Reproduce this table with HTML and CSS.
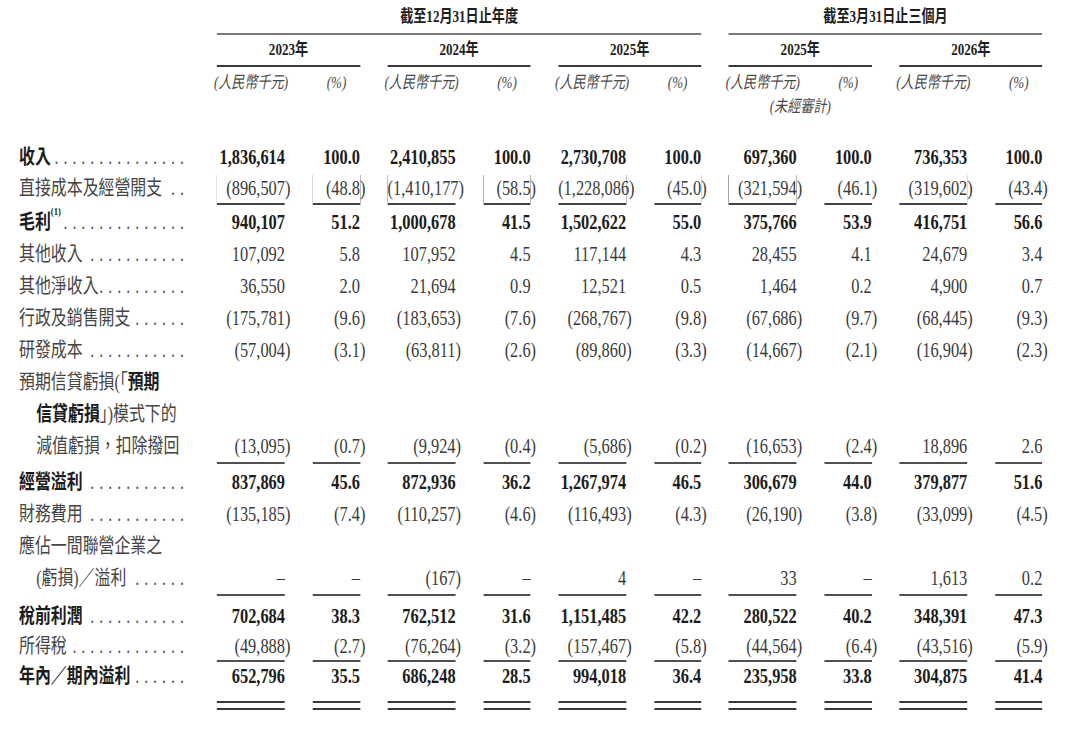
FILE: index.html
```html
<!DOCTYPE html>
<html lang="zh-Hant">
<head>
<meta charset="utf-8">
<title>財務資料</title>
<link rel="stylesheet" href="styles.css">
</head>
<body>
<div class="page">
  <div class="row hd1">
    <div></div>
    <div class="span3">截至12月31日止年度</div>
    <div class="span2">截至3月31日止三個月</div>
  </div>
  <div class="row hd2">
    <div></div>
    <div class="yr">2023年</div>
    <div class="yr">2024年</div>
    <div class="yr">2025年</div>
    <div class="yr">2025年</div>
    <div class="yr">2026年</div>
  </div>
  <div class="row hd3">
    <div></div>
    <div class="g"><div class="hc">(人民幣千元)</div><div class="hc">(%)</div></div>
    <div class="g"><div class="hc">(人民幣千元)</div><div class="hc">(%)</div></div>
    <div class="g"><div class="hc">(人民幣千元)</div><div class="hc">(%)</div></div>
    <div class="g"><div class="hc">(人民幣千元)</div><div class="hc">(%)</div></div>
    <div class="g"><div class="hc">(人民幣千元)</div><div class="hc">(%)</div></div>
  </div>
  <div class="row hd4">
    <div></div>
    <div class="unaud">(未經審計)</div>
  </div>

  <div class="row b bold first">
    <div class="lbl"><span class="t">收入</span><span class="dots">...............</span></div>
    <div class="g"><div class="n">1,836,614</div><div class="n">100.0</div></div>
    <div class="g"><div class="n">2,410,855</div><div class="n">100.0</div></div>
    <div class="g"><div class="n">2,730,708</div><div class="n">100.0</div></div>
    <div class="g"><div class="n">697,360</div><div class="n">100.0</div></div>
    <div class="g"><div class="n">736,353</div><div class="n">100.0</div></div>
  </div>
  <div class="row b lh30 shadowrule">
    <div class="lbl"><span class="t">直接成本及經營開支</span><span class="dots">..</span></div>
    <div class="g"><div class="n">(896,507<span class="p">)</span></div><div class="n">(48.8<span class="p">)</span></div></div>
    <div class="g"><div class="n">(1,410,177<span class="p">)</span></div><div class="n">(58.5<span class="p">)</span></div></div>
    <div class="g"><div class="n">(1,228,086<span class="p">)</span></div><div class="n">(45.0<span class="p">)</span></div></div>
    <div class="g"><div class="n">(321,594<span class="p">)</span></div><div class="n">(46.1<span class="p">)</span></div></div>
    <div class="g"><div class="n">(319,602<span class="p">)</span></div><div class="n">(43.4<span class="p">)</span></div></div>
  </div>
  <div class="row b bold m3">
    <div class="lbl"><span class="t">毛利<sup class="fn">(1)</sup></span><span class="dots">..............</span></div>
    <div class="g"><div class="n">940,107</div><div class="n">51.2</div></div>
    <div class="g"><div class="n">1,000,678</div><div class="n">41.5</div></div>
    <div class="g"><div class="n">1,502,622</div><div class="n">55.0</div></div>
    <div class="g"><div class="n">375,766</div><div class="n">53.9</div></div>
    <div class="g"><div class="n">416,751</div><div class="n">56.6</div></div>
  </div>
  <div class="row b">
    <div class="lbl"><span class="t">其他收入</span><span class="dots">...........</span></div>
    <div class="g"><div class="n">107,092</div><div class="n">5.8</div></div>
    <div class="g"><div class="n">107,952</div><div class="n">4.5</div></div>
    <div class="g"><div class="n">117,144</div><div class="n">4.3</div></div>
    <div class="g"><div class="n">28,455</div><div class="n">4.1</div></div>
    <div class="g"><div class="n">24,679</div><div class="n">3.4</div></div>
  </div>
  <div class="row b">
    <div class="lbl"><span class="t">其他淨收入</span><span class="dots">..........</span></div>
    <div class="g"><div class="n">36,550</div><div class="n">2.0</div></div>
    <div class="g"><div class="n">21,694</div><div class="n">0.9</div></div>
    <div class="g"><div class="n">12,521</div><div class="n">0.5</div></div>
    <div class="g"><div class="n">1,464</div><div class="n">0.2</div></div>
    <div class="g"><div class="n">4,900</div><div class="n">0.7</div></div>
  </div>
  <div class="row b">
    <div class="lbl"><span class="t">行政及銷售開支</span><span class="dots">......</span></div>
    <div class="g"><div class="n">(175,781<span class="p">)</span></div><div class="n">(9.6<span class="p">)</span></div></div>
    <div class="g"><div class="n">(183,653<span class="p">)</span></div><div class="n">(7.6<span class="p">)</span></div></div>
    <div class="g"><div class="n">(268,767<span class="p">)</span></div><div class="n">(9.8<span class="p">)</span></div></div>
    <div class="g"><div class="n">(67,686<span class="p">)</span></div><div class="n">(9.7<span class="p">)</span></div></div>
    <div class="g"><div class="n">(68,445<span class="p">)</span></div><div class="n">(9.3<span class="p">)</span></div></div>
  </div>
  <div class="row b">
    <div class="lbl"><span class="t">研發成本</span><span class="dots">...........</span></div>
    <div class="g"><div class="n">(57,004<span class="p">)</span></div><div class="n">(3.1<span class="p">)</span></div></div>
    <div class="g"><div class="n">(63,811<span class="p">)</span></div><div class="n">(2.6<span class="p">)</span></div></div>
    <div class="g"><div class="n">(89,860<span class="p">)</span></div><div class="n">(3.3<span class="p">)</span></div></div>
    <div class="g"><div class="n">(14,667<span class="p">)</span></div><div class="n">(2.1<span class="p">)</span></div></div>
    <div class="g"><div class="n">(16,904<span class="p">)</span></div><div class="n">(2.3<span class="p">)</span></div></div>
  </div>
  <div class="row b">
    <div class="lbl"><span class="t">預期信貸虧損(「<b>預期</b></span></div>
  </div>
  <div class="row b">
    <div class="lbl ind"><span class="t"><b>信貸虧損</b>」)模式下的</span></div>
  </div>
  <div class="row b">
    <div class="lbl ind"><span class="t">減值虧損，扣除撥回</span></div>
    <div class="g"><div class="n">(13,095<span class="p">)</span></div><div class="n">(0.7<span class="p">)</span></div></div>
    <div class="g"><div class="n">(9,924<span class="p">)</span></div><div class="n">(0.4<span class="p">)</span></div></div>
    <div class="g"><div class="n">(5,686<span class="p">)</span></div><div class="n">(0.2<span class="p">)</span></div></div>
    <div class="g"><div class="n">(16,653<span class="p">)</span></div><div class="n">(2.4<span class="p">)</span></div></div>
    <div class="g"><div class="n">18,896</div><div class="n">2.6</div></div>
  </div>
  <div class="row rulerow">
    <div></div>
    <div class="g"><div class="rl"></div><div class="rl"></div></div>
    <div class="g"><div class="rl"></div><div class="rl"></div></div>
    <div class="g"><div class="rl"></div><div class="rl"></div></div>
    <div class="g"><div class="rl"></div><div class="rl"></div></div>
    <div class="g"><div class="rl"></div><div class="rl"></div></div>
  </div>
  <div class="row b bold m2">
    <div class="lbl"><span class="t">經營溢利</span><span class="dots">...........</span></div>
    <div class="g"><div class="n">837,869</div><div class="n">45.6</div></div>
    <div class="g"><div class="n">872,936</div><div class="n">36.2</div></div>
    <div class="g"><div class="n">1,267,974</div><div class="n">46.5</div></div>
    <div class="g"><div class="n">306,679</div><div class="n">44.0</div></div>
    <div class="g"><div class="n">379,877</div><div class="n">51.6</div></div>
  </div>
  <div class="row b">
    <div class="lbl"><span class="t">財務費用</span><span class="dots">...........</span></div>
    <div class="g"><div class="n">(135,185<span class="p">)</span></div><div class="n">(7.4<span class="p">)</span></div></div>
    <div class="g"><div class="n">(110,257<span class="p">)</span></div><div class="n">(4.6<span class="p">)</span></div></div>
    <div class="g"><div class="n">(116,493<span class="p">)</span></div><div class="n">(4.3<span class="p">)</span></div></div>
    <div class="g"><div class="n">(26,190<span class="p">)</span></div><div class="n">(3.8<span class="p">)</span></div></div>
    <div class="g"><div class="n">(33,099<span class="p">)</span></div><div class="n">(4.5<span class="p">)</span></div></div>
  </div>
  <div class="row b">
    <div class="lbl"><span class="t">應佔一間聯營企業之</span></div>
  </div>
  <div class="row b">
    <div class="lbl ind"><span class="t">(虧損)／溢利</span><span class="dots">......</span></div>
    <div class="g"><div class="n">–</div><div class="n">–</div></div>
    <div class="g"><div class="n">(167<span class="p">)</span></div><div class="n">–</div></div>
    <div class="g"><div class="n">4</div><div class="n">–</div></div>
    <div class="g"><div class="n">33</div><div class="n">–</div></div>
    <div class="g"><div class="n">1,613</div><div class="n">0.2</div></div>
  </div>
  <div class="row rulerow">
    <div></div>
    <div class="g"><div class="rl"></div><div class="rl"></div></div>
    <div class="g"><div class="rl"></div><div class="rl"></div></div>
    <div class="g"><div class="rl"></div><div class="rl"></div></div>
    <div class="g"><div class="rl"></div><div class="rl"></div></div>
    <div class="g"><div class="rl"></div><div class="rl"></div></div>
  </div>
  <div class="row b bold m4">
    <div class="lbl"><span class="t">稅前利潤</span><span class="dots">...........</span></div>
    <div class="g"><div class="n">702,684</div><div class="n">38.3</div></div>
    <div class="g"><div class="n">762,512</div><div class="n">31.6</div></div>
    <div class="g"><div class="n">1,151,485</div><div class="n">42.2</div></div>
    <div class="g"><div class="n">280,522</div><div class="n">40.2</div></div>
    <div class="g"><div class="n">348,391</div><div class="n">47.3</div></div>
  </div>
  <div class="row b tight">
    <div class="lbl"><span class="t">所得稅</span><span class="dots">.............</span></div>
    <div class="g"><div class="n">(49,888<span class="p">)</span></div><div class="n">(2.7<span class="p">)</span></div></div>
    <div class="g"><div class="n">(76,264<span class="p">)</span></div><div class="n">(3.2<span class="p">)</span></div></div>
    <div class="g"><div class="n">(157,467<span class="p">)</span></div><div class="n">(5.8<span class="p">)</span></div></div>
    <div class="g"><div class="n">(44,564<span class="p">)</span></div><div class="n">(6.4<span class="p">)</span></div></div>
    <div class="g"><div class="n">(43,516<span class="p">)</span></div><div class="n">(5.9<span class="p">)</span></div></div>
  </div>
  <div class="row rulerow">
    <div></div>
    <div class="g"><div class="rl"></div><div class="rl"></div></div>
    <div class="g"><div class="rl"></div><div class="rl"></div></div>
    <div class="g"><div class="rl"></div><div class="rl"></div></div>
    <div class="g"><div class="rl"></div><div class="rl"></div></div>
    <div class="g"><div class="rl"></div><div class="rl"></div></div>
  </div>
  <div class="row b bold tight">
    <div class="lbl"><span class="t">年內／期內溢利</span><span class="dots">......</span></div>
    <div class="g"><div class="n">652,796</div><div class="n">35.5</div></div>
    <div class="g"><div class="n">686,248</div><div class="n">28.5</div></div>
    <div class="g"><div class="n">994,018</div><div class="n">36.4</div></div>
    <div class="g"><div class="n">235,958</div><div class="n">33.8</div></div>
    <div class="g"><div class="n">304,875</div><div class="n">41.4</div></div>
  </div>
  <div class="row dblrow">
    <div></div>
    <div class="g"><div class="dbl"></div><div class="dbl"></div></div>
    <div class="g"><div class="dbl"></div><div class="dbl"></div></div>
    <div class="g"><div class="dbl"></div><div class="dbl"></div></div>
    <div class="g"><div class="dbl"></div><div class="dbl"></div></div>
    <div class="g"><div class="dbl"></div><div class="dbl"></div></div>
  </div>
</div>
</body>
</html>
```

FILE: styles.css
```css
html, body {
  margin: 0;
  padding: 0;
  background: #ffffff;
  overflow: hidden;
}

.page {
  width: 1080px;
  transform: scaleX(0.78);
  transform-origin: 0 0;
  font-family: "Liberation Serif", "Noto Sans CJK TC", serif;
  color: #3d3d3d;
}

.row {
  display: grid;
  grid-template-columns: 242.9px repeat(5, 183.4px);
  column-gap: 35.3px;
}

.g {
  display: grid;
  grid-template-columns: 87.2px 60.3px;
  column-gap: 35.9px;
}

/* ---------- header ---------- */
.hd1 {
  font-size: 16.8px;
  font-weight: 700;
  color: #1e1e1e;
}
.span3, .span2 {
  text-align: center;
  line-height: 26px;
  padding-top: 4px;
  padding-bottom: 3px;
  border-bottom: 2px solid #7a7a7a;
}
.span3 { grid-column: 2 / span 3; }
.span2 { grid-column: 5 / span 2; }

.hd2 {
  font-size: 16.8px;
  font-weight: 700;
  color: #1e1e1e;
}
.yr {
  text-align: center;
  line-height: 26px;
  padding-top: 2px;
  padding-bottom: 2px;
  border-bottom: 2px solid #3a3a3a;
}

.hd3 {
  margin-top: 4px;
  font-size: 16.8px;
  font-style: italic;
  color: #4a4a4a;
}
.hc {
  display: flex;
  justify-content: center;
  white-space: nowrap;
  line-height: 24px;
}

.hd4 {
  font-size: 16.8px;
  font-style: italic;
  color: #4a4a4a;
}
.unaud {
  grid-column: 5;
  text-align: center;
  line-height: 24px;
}

/* ---------- body ---------- */
.b {
  font-size: 21px;
  line-height: 32px;
}
.first { margin-top: 22px; }
.lh30 { line-height: 30px; }
.m2 { margin-top: 2px; }
.m3 { margin-top: 3px; }
.m4 { margin-top: 4px; }
.tight { line-height: 28px; }

.lbl {
  display: flex;
  white-space: nowrap;
  padding-left: 24.4px;
  padding-right: 7px;
  font-size: 20.4px;
  color: #454545;
  font-weight: 400;
}
.lbl.ind { padding-left: 46.4px; }
.lbl b { font-weight: 700; color: #1c1c1c; }
.bold .lbl .t { font-weight: 700; color: #1c1c1c; }

.dots {
  flex: 1;
  text-align: right;
  font-weight: 400;
  color: #555555;
  letter-spacing: 6.4px;
  margin-right: -6.4px;
}

.fn {
  font-size: 11px;
  line-height: 1;
  vertical-align: top;
  letter-spacing: 0;
}

.n {
  text-align: right;
  white-space: nowrap;
  color: #3a3a3a;
}
.bold .n {
  font-weight: 700;
  color: #1c1c1c;
}
.p {
  margin-right: -0.333em;
}

/* first subtotal rule, drawn as an outer shadow below the figures */
.shadowrule .n {
  box-shadow: 0 2px 0 0 #444444;
}

/* single rule under a column of figures */
.rl {
  height: 2px;
  background: #505050;
}

.dblrow {
  margin-top: 11px;
}
.dbl {
  height: 5px;
  border-top: 2px solid #3a3a3a;
  border-bottom: 2px solid #3a3a3a;
}
```
